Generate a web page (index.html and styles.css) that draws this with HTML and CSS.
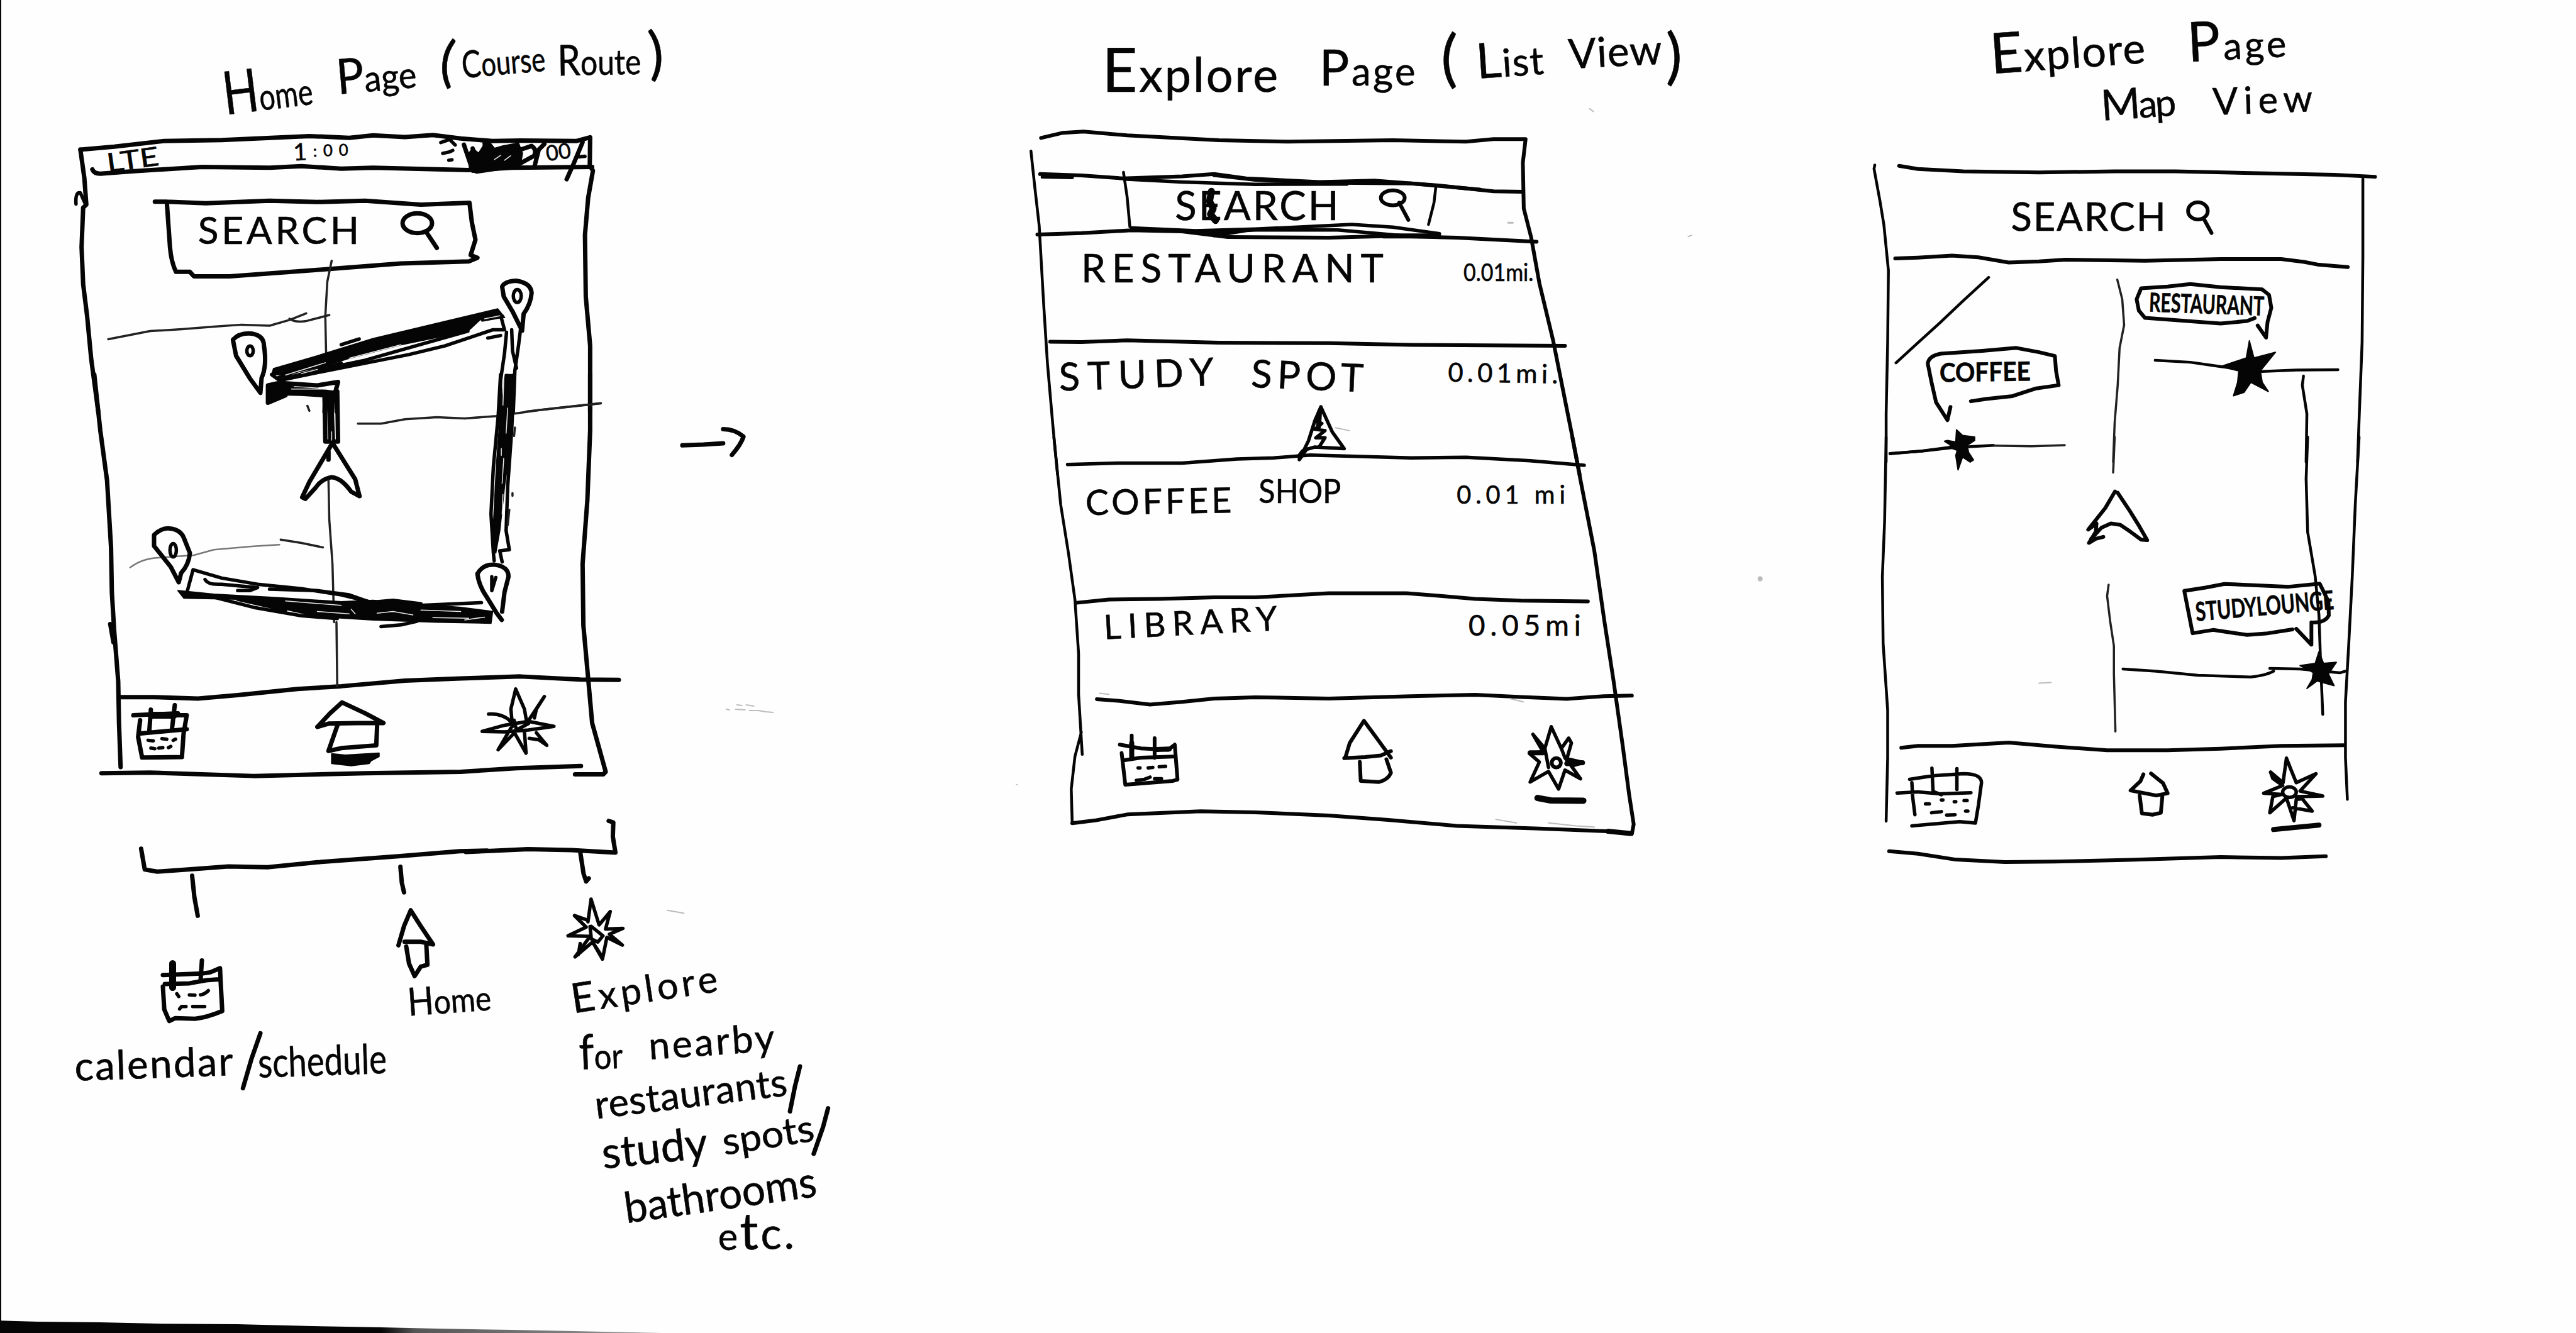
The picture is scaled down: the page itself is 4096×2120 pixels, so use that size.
FILE: index.html
```html
<!DOCTYPE html>
<html lang="en">
<head>
<meta charset="utf-8">
<title>Campus route app wireframes</title>
<link rel="stylesheet" href="styles.css">
</head>
<body>
<main class="board">

<section class="panel panel-home">
<svg class="sketch" viewBox="0 0 1500 2135">
  <defs>
    <linearGradient id="edge" gradientUnits="userSpaceOnUse" x1="610" y1="0" x2="1060" y2="0">
      <stop offset="0" stop-color="#050505"/>
      <stop offset=".12" stop-color="#555"/>
      <stop offset="1" stop-color="#999"/>
    </linearGradient>
  </defs>
  <!-- paper edge -->
  <path class="solid" d="M0 0H2V2135H0Z"/>
  <path class="solid" d="M0 2115L60 2117L160 2118L250 2120L380 2121L500 2124L612 2126V2135H0Z"/>
  <path fill="url(#edge)" d="M610 2126L700 2128L820 2130L920 2132L1060 2135H610Z"/>

  <!-- title -->
  <text class="ink" transform="translate(361 184) rotate(-7)" textLength="143" lengthAdjust="spacingAndGlyphs" font-size="96">H<tspan font-size="58">ome</tspan></text>
  <text class="ink" transform="translate(541 151) rotate(-5)" textLength="128" lengthAdjust="spacingAndGlyphs" font-size="78">P<tspan font-size="58">age</tspan></text>
  <text class="ink" transform="translate(702 128) rotate(6)" font-size="88">(</text>
  <text class="ink" transform="translate(741 125) rotate(-5)" textLength="134" lengthAdjust="spacingAndGlyphs" font-size="60">C<tspan font-size="54">ourse</tspan></text>
  <text class="ink" transform="translate(893 121) rotate(-1)" textLength="134" lengthAdjust="spacingAndGlyphs" font-size="68">R<tspan font-size="56">oute</tspan></text>
  <text class="ink" transform="translate(1040 118) rotate(-4)" font-size="92">)</text>

  <!-- phone, upper half -->
  <g class="pen" transform="translate(100 40) scale(.63776 .39541)">
    <path d="M45 505L130 493L255 470L400 466L620 450L720 457L780 447L860 454L930 446L1000 460L1080 470L1150 468L1290 470L1325 455L1324 570L1332 590L1320 700L1312 850L1314 1100L1325 1300L1325 1568"/>
    <path d="M45 505L55 620L60 728L52 740L48 900L52 1050L62 1180L72 1350L90 1568"/>
    <path class="mid" d="M34 725Q32 675 45 680L56 720"/>
    <path d="M75 585Q80 605 100 602L180 592L350 575L520 578L600 572L700 582L780 578L1020 588L1130 578L1330 575"/>
    <path d="M232 716L262 716L360 722L520 712L640 717L760 712L900 728L1022 720L1028 800L1037 870L1025 932L1042 943L1020 958L850 966L640 992L420 1018L330 1018L320 1000L285 1000Q273 960 270 900L262 716"/>
    <!-- magnifier -->
    <ellipse cx="891" cy="803" rx="37" ry="40"/><path d="M912 835L940 903"/>
    <!-- signal glyph -->
    <path class="mid" d="M950 476L972 464L986 486M955 520L970 515L980 508M970 548L978 546"/>
    <!-- battery scribble -->
    <path class="solid" d="M1020 520L1030 500L1045 520L1060 480L1070 470L1085 500L1105 490L1145 478L1155 520L1150 565L1145 575L1040 600L1022 590Z"/>
    <path class="scratch" d="M1085 545L1100 528M1110 548L1125 530"/>
    <path d="M1008 485L1030 590M1030 500L1045 570M1060 480L1068 560M1150 505L1178 490Q1192 505 1184 530L1150 560M1186 568L1196 505L1210 482M1306 475L1284 560L1266 625"/>
    <path class="mid" d="M1297 534L1312 532"/>
    <!-- side streets -->
    <path class="thin" d="M676 955L665 1040L660 1180L662 1330M115 1273L220 1240L300 1232L380 1222L450 1214L520 1218L570 1195L612 1168M570 1190Q590 1210 620 1196L670 1175"/>
    <path class="thin" d="M1165 1566L1250 1550L1352 1532"/>
    <!-- pins -->
    <path d="M1104 1060Q1110 1038 1140 1036Q1176 1045 1178 1085Q1176 1130 1158 1170L1154 1238L1130 1160L1108 1100Z"/>
    <ellipse class="mid" cx="1142" cy="1098" rx="10" ry="26"/>
    <path d="M428 1275Q445 1245 475 1250Q506 1258 506 1300Q514 1380 500 1430L497 1490L470 1430L436 1340Z"/>
    <ellipse class="mid" cx="471" cy="1320" rx="8" ry="20"/>
    <!-- route: first leg -->
    <path class="solid" d="M1093 1150L1110 1185L1050 1192L1018 1240L850 1295L720 1350L650 1385L560 1415L525 1418L530 1392L640 1340L780 1270Z"/>
    <path d="M525 1416L545 1440L640 1408L760 1370L870 1335L960 1300L1080 1235L1110 1235L1100 1175M545 1438L700 1370M540 1430L620 1385" class="mid"/>
    <path class="mid" d="M700 1295L745 1272M1068 1268L1100 1258M1055 1195L1105 1180M650 1395L760 1358L860 1312L1018 1240"/>
    <path class="scratch" d="M560 1418L660 1368M600 1412L640 1395M720 1350L850 1295M1060 1190L1098 1178"/>
    <path class="solid" d="M513 1465L540 1450L580 1465L570 1480L690 1485L690 1510L600 1500L550 1498L515 1535Z"/>
    <path d="M516 1530L516 1460L545 1450L640 1460L692 1446L685 1488L690 1568M516 1530L560 1500M660 1500L658 1568"/>
    <path class="heavy" d="M674 1495L674 1568"/>
    <!-- second leg, top -->
    <path class="mid" d="M1115 1245L1110 1330L1100 1440L1098 1568M1128 1235L1130 1320L1140 1390M1150 1235L1145 1300L1136 1400L1132 1568M1116 1420L1114 1568"/>
    <path class="heavy" d="M1125 1460L1122 1568"/>
  </g>

  <!-- phone, lower half -->
  <g class="pen" transform="translate(100 600) scale(.63776 .44643)">
    <path d="M80 0L95 200L112 380L122 620L124 780L130 920L140 1100L142 1250L146 1408"/>
    <path d="M120 895L128 960"/>
    <path d="M1325 0L1325 200L1318 450L1306 680L1308 900L1320 1090L1330 1250L1364 1425L1358 1434L1287 1434"/>
    <path d="M98 1430L220 1428L480 1440L760 1430L1000 1425L1140 1412L1302 1404"/>
    <path d="M145 1157L230 1157L340 1162L440 1150L590 1128L700 1118L860 1098L1000 1090L1150 1083L1300 1094L1397 1095"/>
    <path class="heavy" d="M520 50L640 62L680 70M672 70L674 170L676 235"/>
    <path d="M658 80L660 240L692 240L690 60"/>
    <path class="scratch" d="M676 205L676 235M575 52L660 52"/>
    <path d="M678 245L735 375L746 436L725 420Q700 370 676 368Q650 375 636 405L610 446L602 440L620 385L678 245M668 275L668 305"/>
    <path class="thin" d="M668 380L670 520L678 680L682 888M688 888L690 1118M742 176L800 176L860 160L940 153L1010 157L1090 149L1200 127L1352 103"/>
    <path class="hair" d="M170 692Q200 660 240 657L330 648L380 628L480 616L545 610"/>
    <path class="thin" d="M548 592L600 604L654 620M615 112L620 130"/>
    <!-- second leg -->
    <path class="solid" d="M1112 0H1134L1128 180L1120 300L1110 400L1098 560L1088 640L1080 600L1090 320L1100 130Z"/>
    <path d="M1100 0L1094 150L1082 330L1076 500L1082 640L1084 668M1134 0L1128 200L1118 400L1114 560L1122 628L1098 632L1104 672" class="mid"/>
    <path class="scratch" d="M1108 20L1106 110M1102 265L1102 290M1108 300L1104 390M1118 120L1114 210M1106 430L1104 500"/>
    <path class="thin" d="M1136 190L1134 220M1130 425V435M1122 485L1118 540"/>
    <!-- pins -->
    <path d="M230 575Q250 548 270 552Q298 556 306 590L320 640Q318 680 298 712L292 745L272 690L230 615Z"/>
    <ellipse class="mid" cx="278" cy="630" rx="8" ry="24"/>
    <path d="M1042 715Q1055 680 1085 682Q1120 688 1120 725L1110 780L1104 850M1042 715Q1045 755 1064 795L1090 855L1103 880"/>
    <path class="mid" d="M1078 725L1078 775L1088 728"/>
    <!-- third leg -->
    <path d="M310 795L328 700L400 730L490 752L600 768L700 790L780 818L900 828L1052 818" class="mid"/>
    <path class="solid" d="M290 775L380 788L540 800L700 815L780 810L880 822L1000 835L1080 850L1076 892L940 888L780 880L640 868L560 842L440 806L305 802Z"/>
    <path class="mid" d="M370 795L480 835L600 865L690 875M440 806L560 845M520 770L640 775L720 790L790 825M790 815L830 810L900 822M800 904L850 898L890 885M358 735Q365 755 400 752L490 764L470 775L440 775"/>
    <path class="scratch" d="M560 812L700 828M790 856L830 850L880 862M900 845L1000 850M930 872L1020 874M640 850L720 858M725 842L735 858M1010 880L1060 870"/>
    <!-- tab icons -->
    <path d="M178 1222L290 1215M222 1202L218 1280M282 1186L275 1272M195 1240L190 1300L200 1374L300 1372L304 1290L312 1222L290 1222M192 1288L312 1272"/>
    <path class="heavy" d="M225 1222L280 1222"/>
    <path class="mid" d="M215 1312L228 1314M250 1306L262 1308M278 1312L284 1308M222 1340L232 1342M242 1340L252 1338M266 1338L272 1334"/>
    <path d="M640 1264L672 1215L702 1176L760 1215L806 1250L740 1250L668 1252L640 1264M690 1260L668 1350L700 1340L788 1330L790 1262"/>
    <path class="solid" d="M676 1360L710 1365L795 1358L795 1370L775 1385L770 1395L725 1403L676 1395Z"/>
    <path class="mid" d="M1138 1128L1126 1200L1130 1262M1138 1128L1160 1200L1166 1250L1210 1155L1190 1200L1185 1232M1070 1218Q1105 1215 1126 1245M1054 1280L1110 1258L1170 1244L1234 1262L1170 1275L1110 1282L1054 1280M1126 1268L1094 1346L1135 1285L1164 1358L1160 1280M1172 1305L1196 1310L1216 1330L1190 1285M1134 1240L1140 1275L1170 1252"/>
  </g>
  <text class="ink" transform="translate(173 276) rotate(-8)" textLength="84" lengthAdjust="spacingAndGlyphs" font-size="42">LTE</text>
  <text class="ink" transform="translate(470 257) rotate(-2)" textLength="88" lengthAdjust="spacing" font-size="38">1<tspan dy="-5" font-size="26">:00</tspan></text>
  <text class="ink" transform="translate(317 391)" textLength="258" lengthAdjust="spacing" font-size="61">SEARCH</text>
  <text class="ink" transform="translate(876 258) rotate(-8)" textLength="40" lengthAdjust="spacingAndGlyphs" font-size="34">00</text>

  <!-- arrow to the next screen -->
  <g class="pen" transform="translate(1070 650) scale(.3333)">
    <path d="M68 190L170 186L264 180M264 112Q320 112 362 148Q350 185 306 236"/>
  </g>

  <!-- tab bar legend -->
  <g class="pen" transform="translate(80 1270) scale(.44643 .33333)">
    <path d="M327 268L340 368L385 378L520 365L640 353L780 357L960 333L1250 304L1470 280L1568 277M510 398L518 500L530 590M1257 355L1262 430L1270 478"/>
    <path d="M405 875L545 868L575 862L610 842L612 900L618 1048Q560 1080 520 1085L450 1082L428 1096L410 1040L405 930M412 918L500 915L560 900L612 895M545 805L540 905"/>
    <path class="heavy" d="M440 820L440 935"/>
    <path class="mid" d="M455 965L462 978M500 970L520 972M540 970Q555 968 568 950M465 1038L472 1026L488 1026M512 1026L555 1026"/>
    <path d="M1250 732L1270 640L1294 564L1330 640L1374 728L1330 715L1272 715M1278 738L1288 820L1308 880L1330 835L1354 826L1350 730"/>
  </g>
  <g class="pen" transform="translate(750 1270) scale(.41454 .49745)">
    <path d="M-10 190L100 186L230 181L400 184L568 192L558 140L560 95L542 90M433 195L445 260L455 285L465 275"/>
    <path class="mid" d="M474 342L462 415M410 395L455 432L385 460L470 462L412 528L480 480L518 535L535 465L595 490L545 455L597 436L530 438L548 382L505 425L474 342M410 395L462 410M425 520L432 485M470 430L475 470L500 480L520 460L490 440L475 430M480 480L515 525M545 455L585 440"/>
    <path class="hair faint" d="M768 378L832 387"/>
  </g>
  <path class="hair faint pen" d="M1163 1136L1168 1137M1180 1129L1188 1130M1195 1129L1207 1131M1178 1136L1193 1137M1200 1138L1214 1138L1226 1140L1238 1141"/>

  <text class="ink" transform="translate(120 1731) rotate(-2)" textLength="254" lengthAdjust="spacing" font-size="64">calendar</text>
  <path class="pen" d="M417 1655L403 1695L389 1743"/>
  <text class="ink" transform="translate(414 1726) rotate(-2)" textLength="206" lengthAdjust="spacingAndGlyphs" font-size="66">schedule</text>
  <text class="ink" transform="translate(654 1627) rotate(-4)" textLength="134" lengthAdjust="spacingAndGlyphs" font-size="62">H<tspan font-size="54">ome</tspan></text>
  <text class="ink" transform="translate(918 1623) rotate(-8.6)" textLength="236" lengthAdjust="spacing" font-size="66">E<tspan font-size="60">xplore</tspan></text>
  <text class="ink" transform="translate(928 1713) rotate(-2)" textLength="70" lengthAdjust="spacingAndGlyphs" font-size="78">f<tspan font-size="56">or</tspan></text>
  <text class="ink" transform="translate(1040 1697) rotate(-4)" textLength="202" lengthAdjust="spacing" font-size="61">nearby</text>
  <text class="ink" transform="translate(955 1792) rotate(-7)" textLength="310" lengthAdjust="spacing" font-size="62">restaurants</text>
  <path class="pen" d="M1281 1708L1273 1740L1265 1780"/>
  <text class="ink" transform="translate(966 1872) rotate(-6)" textLength="170" lengthAdjust="spacing" font-size="70">study</text>
  <text class="ink" transform="translate(1160 1850) rotate(-9)" textLength="148" lengthAdjust="spacingAndGlyphs" font-size="60">spots</text>
  <path class="pen" d="M1326 1775L1318 1805L1303 1848"/>
  <text class="ink" transform="translate(1003 1959) rotate(-8)" textLength="310" lengthAdjust="spacingAndGlyphs" font-size="68">bathrooms</text>
  <text class="ink" transform="translate(1150 2002) rotate(-1)" textLength="122" lengthAdjust="spacing" font-size="60">e<tspan font-size="82">t</tspan><tspan font-size="70">c.</tspan></text>
</svg>
</section>

<section class="panel panel-list">
<svg class="sketch" viewBox="1500 0 1350 2135">
  <text class="ink" transform="translate(1765 147)" textLength="282" lengthAdjust="spacing" font-size="98">E<tspan font-size="76">xplore</tspan></text>
  <text class="ink" transform="translate(2113 137)" textLength="154" lengthAdjust="spacing" font-size="80">P<tspan font-size="62">age</tspan></text>
  <text class="ink" transform="translate(2308 128)" font-size="100">(</text>
  <text class="ink" transform="translate(2366 126) rotate(-4)" textLength="108" lengthAdjust="spacing" font-size="78">L<tspan font-size="62">ist</tspan></text>
  <text class="ink" transform="translate(2513 110) rotate(-3)" textLength="150" lengthAdjust="spacing" font-size="66">View</text>
  <text class="ink" transform="translate(2668 124)" font-size="98">)</text>

  <!-- phone, upper half -->
  <g class="pen list" transform="translate(1600 40) scale(.73342 .45918)">
    <path d="M92 394L140 376L185 372L280 385L480 402L630 407L860 402L1020 407L1080 398L1150 398L1144 480L1146 640L1162 740L1180 900L1210 1100L1250 1420L1268 1568"/>
    <path class="thinner" d="M70 440L78 560L88 700L98 980L106 1180L118 1400L128 1568"/>
    <path d="M90 520L180 525L270 535L400 528L470 520L540 535L700 548L820 543L960 560L1080 580L1144 582"/>
    <path d="M470 524L560 540L700 550L900 553L1050 574"/>
    <path class="mid" d="M280 538L400 548L560 556L760 555M95 530L160 532"/>
    <path class="thinner" d="M272 514L280 600L286 704M954 565L950 620L938 696"/>
    <path d="M84 731L180 726L290 716L400 720L500 740L720 742L860 736L1000 742L1174 756"/>
    <path class="mid" d="M290 708L430 718L560 712L770 696L860 705L962 728M440 725L560 715L740 715L880 735M470 735L560 712"/>
    <path class="heavy2" d="M440 720L500 722M840 736L960 736"/>
    <ellipse cx="860" cy="603" rx="26" ry="26"/><path d="M874 620L894 680"/>
    <path class="heavy" d="M464 580L460 615L468 640L462 660L473 682"/>
    <path d="M112 1105L180 1106L280 1100L480 1108L720 1110L900 1116L1236 1119"/>
    <path class="mid" d="M150 1533L260 1528L400 1528L520 1514L600 1510L680 1500L900 1510L1020 1508L1160 1520L1278 1536"/>
    <path d="M703 1332L690 1380L676 1450L656 1516L672 1480L690 1472L754 1478L728 1420L703 1332M690 1380L705 1390L690 1410L712 1415L692 1440L712 1440L700 1470" class="mid"/>
    <path class="heavy2" d="M700 1350L698 1400M656 1505L664 1488"/>
    <path class="speck" d="M1112 690L1122 690"/>
    <path class="hair faint" d="M735 1405L765 1415M1290 292L1298 302M1505 738L1512 734"/>
  </g>

  <!-- phone, lower half -->
  <g class="pen list" transform="translate(1600 700) scale(.73342 .43367)">
    <path class="thinner" d="M120 0L135 250L152 430L166 600L174 800L174 950L182 1172M180 1090L166 1180L158 1300L160 1420"/>
    <path d="M1252 0L1270 160L1300 420L1322 680L1342 900L1362 1140L1376 1320L1386 1430L1382 1466L1330 1456L1180 1446L1000 1436L850 1414L720 1398L560 1386L440 1382L280 1394L210 1416L160 1426"/>
    <path d="M170 612L240 600L350 598L470 592L560 592L720 577L890 577L960 586L1040 598L1140 604L1286 607"/>
    <path d="M214 968L260 974L330 988L400 978L470 966L560 961L720 966L900 957L1040 952L1140 960L1240 967L1320 957L1382 955"/>
    <path d="M264 1136L310 1150L370 1155L384 1136L390 1265L380 1270L276 1284L268 1167M290 1102V1190M340 1112V1185M272 1194L310 1184L380 1180"/>
    <path class="heavy2" d="M345 1154L372 1152M290 1130V1185"/>
    <path class="mid" d="M304 1222L308 1222M326 1222L336 1220M350 1218L364 1216M300 1268L318 1264L330 1256M340 1262L355 1262"/>
    <path d="M756 1186L766 1130L797 1048L824 1110L856 1184M754 1186L800 1182L834 1176L856 1160M788 1200L790 1270L830 1274Q850 1265 856 1240L846 1190"/>
    <path class="mid" d="M1206 1070L1192 1150L1166 1098L1188 1162L1158 1168L1180 1200L1160 1274L1200 1235L1222 1300L1236 1230L1270 1262L1250 1215L1276 1202L1240 1188L1250 1130L1244 1112L1228 1150L1206 1070M1192 1150L1200 1220M1228 1150L1236 1185L1250 1215"/>
    <ellipse cx="1217" cy="1203" rx="10" ry="17"/>
    <path class="heavy2" d="M1160 1166L1188 1166M1240 1206L1274 1203"/>
    <path class="under" d="M1176 1333L1205 1342L1276 1343"/>
    <path class="heavy2" d="M1330 1456L1378 1464"/>
    <path class="hair faint" d="M1085 1412L1130 1425M1200 1425L1260 1436L1300 1440M1115 966L1145 978M220 946L240 950"/>
    <circle class="speck" cx="39" cy="1284" r="1"/>
  </g>

  <text class="ink" transform="translate(1882 352)" textLength="262" lengthAdjust="spacing" font-size="64">SEARCH</text>
  <text class="ink" transform="translate(1732 452)" textLength="484" lengthAdjust="spacing" font-size="62">RESTAURANT</text>
  <text class="ink" transform="translate(2344 450)" textLength="112" lengthAdjust="spacingAndGlyphs" font-size="38">0.01mi.</text>
  <text class="ink" transform="translate(1697 626) rotate(-2)" textLength="248" lengthAdjust="spacing" font-size="62">STUDY</text>
  <text class="ink" transform="translate(2003 620) rotate(2.5)" textLength="180" lengthAdjust="spacing" font-size="62">SPOT</text>
  <text class="ink" transform="translate(2319 611) rotate(1)" textLength="176" lengthAdjust="spacing" font-size="42">0.01mi.</text>
  <text class="ink" transform="translate(1739 825) rotate(-1)" textLength="234" lengthAdjust="spacing" font-size="56">COFFEE</text>
  <text class="ink" transform="translate(2016 806)" textLength="132" lengthAdjust="spacingAndGlyphs" font-size="52">SHOP</text>
  <text class="ink" transform="translate(2333 807)" textLength="174" lengthAdjust="spacing" font-size="40">0.01 mi</text>
  <text class="ink" transform="translate(1769 1024) rotate(-3)" textLength="278" lengthAdjust="spacing" font-size="54">LIBRARY</text>
  <text class="ink" transform="translate(2352 1018)" textLength="180" lengthAdjust="spacing" font-size="46">0.05mi</text>
  <circle class="speck" cx="2819" cy="927" r="2.5"/>
</svg>
</section>

<section class="panel panel-map">
<svg class="sketch" viewBox="2850 0 1275 2135">
  <text class="ink" transform="translate(3189 118) rotate(-4)" textLength="248" lengthAdjust="spacing" font-size="90">E<tspan font-size="68">xplore</tspan></text>
  <text class="ink" transform="translate(3504 99) rotate(-3)" textLength="158" lengthAdjust="spacing" font-size="88">P<tspan font-size="60">age</tspan></text>
  <text class="ink" transform="translate(3366 193) rotate(-4)" textLength="120" lengthAdjust="spacing" font-size="68">M<tspan font-size="60">ap</tspan></text>
  <text class="ink" transform="translate(3544 184) rotate(-2)" textLength="160" lengthAdjust="spacing" font-size="60">View</text>

  <!-- phone, upper half -->
  <g class="pen map" transform="translate(2950 20) scale(.60587 .45918)">
    <path class="thinner" d="M86 532L84 545L100 660L110 740L122 900L120 1150L116 1400L116 1568M1376 580L1376 850L1374 1150L1366 1420L1362 1568"/>
    <path d="M150 535L200 546L320 554L520 558L720 554L880 554L1140 562L1300 566L1408 573"/>
    <path d="M140 858L200 855L290 848L360 854L440 872L520 868L590 862L800 866L1000 860L1160 860L1220 870L1260 880L1336 888"/>
    <ellipse cx="940" cy="692" rx="26" ry="30"/><path d="M955 718L976 769"/>
    <path class="thinner" d="M387 924L320 1005L260 1080L200 1152L142 1222"/>
    <path class="thin" d="M727 932L740 1000L745 1090L733 1170L728 1300L720 1430L716 1568"/>
    <path class="thinner" d="M827 1213L920 1220L1000 1235L1110 1252L1200 1247L1310 1246M1219 1268L1216 1300L1228 1400L1226 1568"/>
    <path class="thinner" d="M126 1538L210 1530L290 1518L400 1510"/>
    <path class="thin" d="M400 1511L500 1513L588 1509"/>
    <path d="M1090 1066L1070 1076L1000 1085L900 1075L800 1065L784 1040L778 1000L790 962L860 956L920 947L1000 958L1110 966L1128 985L1134 1030L1124 1080L1120 1134L1098 1092"/>
    <path d="M340 1356L380 1348L450 1338L510 1312L572 1300L565 1250L562 1198L520 1185L460 1170L370 1180L260 1190Q228 1198 226 1225L236 1290L248 1360L278 1422L286 1376"/>
    <path class="solid" d="M1076 1145L1068 1205L1000 1235L1048 1250L1045 1290L1034 1337L1062 1325L1080 1290L1126 1322L1110 1290L1105 1250L1145 1185L1088 1205Z"/>
  </g>

  <!-- phone, lower half -->
  <g class="pen map" transform="translate(2950 700) scale(.60587 .44643)">
    <path class="thinner" d="M116 0L112 300L106 500L108 740L120 980L120 1150L116 1378M1366 0L1356 240L1348 500L1338 760L1330 950L1330 1150L1335 1300"/>
    <path d="M156 1115L200 1108L290 1108L440 1096L560 1110L700 1124L860 1124L1000 1118L1160 1108L1326 1106"/>
    <path d="M124 1486L200 1495L300 1516L430 1525L560 1523L760 1517L1000 1507L1160 1510L1278 1504"/>
    <path class="thin" d="M720 0L716 127M704 530L700 570L708 660L718 750L718 850L722 1056"/>
    <path class="thinner" d="M742 832L830 840L940 855L1080 861Q1120 855 1140 840M126 60L210 50L290 36M1130 830L1210 832L1315 846L1334 838M1230 0L1226 150L1230 340L1250 500L1260 640L1264 800L1270 995"/>
    <path class="solid" d="M302 -26L318 -6L350 0L350 12L330 30L334 55L347 82L338 90L318 72L306 118L300 66L304 48L285 38L285 28L270 15L278 12L300 18Z"/>
    <path d="M721 195L695 255L650 332L672 310L670 340L652 380L670 365L690 358M658 365L685 325L710 310L735 315L762 340L790 368L806 370L785 320L760 265L728 200"/>
    <path d="M1190 690L1120 705L1070 710L980 692L926 704L904 552L960 540L1010 527L1180 537L1262 526L1285 590L1286 640Q1275 668 1240 665L1240 745L1200 688"/>
    <path class="solid" d="M1260 770L1250 812L1210 820L1245 845L1242 870L1228 902L1255 875L1300 892L1285 850L1306 808L1272 812Z"/>
    <path d="M178 1228L240 1215L320 1208Q368 1208 368 1240L360 1320L352 1385L310 1380L184 1395M184 1240L186 1290L192 1355M145 1277L200 1273L260 1280L340 1276M237 1188L240 1272L262 1283M303 1190V1264" class="mid"/>
    <path class="mid" d="M220 1316L230 1316M262 1302H266M296 1308H300M322 1304H330M236 1348L262 1344M276 1356L298 1355M326 1342H332"/>
    <path d="M796 1210L788 1235L762 1268L800 1278L830 1286L860 1278L848 1242L816 1207M786 1286L792 1350L820 1355L842 1348L846 1290"/>
    <path d="M1174 1152L1165 1240L1132 1202L1138 1225L1164 1250L1114 1278L1162 1282L1138 1290L1130 1348L1174 1295L1194 1376L1200 1300L1216 1298L1242 1342L1190 1330M1200 1290L1270 1288L1210 1270L1252 1208L1200 1240L1185 1190L1174 1152" class="mid"/>
    <ellipse class="mid" cx="1182" cy="1274" rx="18" ry="19"/>
    <path class="heavy2" d="M1140 1408L1200 1400L1260 1392"/>
    <path class="hair faint" d="M520 883L552 881"/>
  </g>

  <text class="ink" transform="translate(3220 370)" textLength="248" lengthAdjust="spacing" font-size="62">SEARCH</text>
  <text class="ink bold" transform="translate(3441 499) rotate(2)" textLength="184" lengthAdjust="spacingAndGlyphs" font-size="42">RESTAURANT</text>
  <text class="ink bold" transform="translate(3106 612) rotate(-1)" textLength="146" lengthAdjust="spacingAndGlyphs" font-size="42">COFFEE</text>
  <text class="ink bold" transform="translate(3517 995) rotate(-5)" textLength="222" lengthAdjust="spacingAndGlyphs" font-size="42">STUDYLOUNGE</text>
</svg>
</section>

</main>
</body>
</html>
```
FILE: styles.css
```css
html,
body {
  margin: 0;
  height: 100%;
  background: #fefefe;
}

.board {
  display: flex;
  width: 100vw;
  height: 100vh;
  overflow: hidden;
}

.panel {
  min-width: 0;
  height: 100%;
}

.panel-home {
  flex: 1500 1500 0;
}

.panel-list {
  flex: 1350 1350 0;
}

.panel-map {
  flex: 1275 1275 0;
}

.sketch {
  display: block;
  width: 100%;
  height: 100%;
  overflow: visible;
}

.pen,
.pen path,
.pen ellipse {
  fill: none;
  stroke: #050505;
  stroke-width: 7px;
  stroke-linecap: round;
  stroke-linejoin: round;
  vector-effect: non-scaling-stroke;
}

.list path,
.list ellipse,
.map path,
.map ellipse {
  stroke-width: 6px;
}

.pen .thinner {
  stroke-width: 4.5px;
}

.pen .thin {
  stroke: #222;
  stroke-width: 3.5px;
}

.pen .hair,
.pen.hair {
  stroke: #777;
  stroke-width: 2.5px;
}

.pen .faint,
.pen.faint {
  stroke: #bbb;
  stroke-width: 2px;
}

.pen .mid {
  stroke-width: 5.5px;
}

.pen .heavy {
  stroke-width: 11px;
}

.pen .heavy2 {
  stroke-width: 8px;
}

.pen .under {
  stroke-width: 10px;
}

.pen .scratch {
  stroke: #e8e8e8;
  stroke-width: 1.5px;
}

.solid,
.pen .solid {
  fill: #050505;
}

.pen .solid {
  stroke-width: 2px;
}

.speck,
.pen .speck {
  fill: #bbb;
  stroke: #bbb;
  stroke-width: 3px;
}

.ink {
  font-family: Lato, "Open Sans", sans-serif;
  font-weight: 400;
  fill: #050505;
  stroke: #050505;
  stroke-width: .6px;
  stroke-linejoin: round;
}

.bold {
  font-weight: 700;
}
```
